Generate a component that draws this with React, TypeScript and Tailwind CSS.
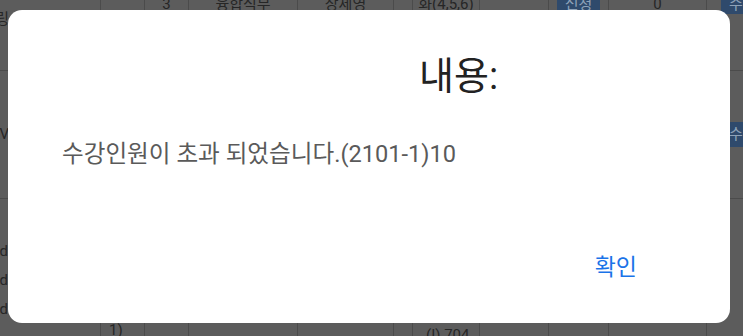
import React from "react";

const COLS = [200, 44, 44, 109, 96, 19, 67, 69, 60, 98, 60];

function Cell({ w, children, className = "" }: { w: number; children?: React.ReactNode; className?: string }) {
  return (
    <div style={{ width: w }} className={`shrink-0 border-r border-[#4b4b4b] ${className}`}>
      {children}
    </div>
  );
}

function DimButton({ label }: { label: string }) {
  return (
    <span className="rounded-sm bg-[#2f4a6c] px-2 py-[1px] text-[15px] text-[#8ea2b8]">{label}</span>
  );
}

export default function App() {
  return (
    <div className="relative h-[336px] w-[743px] overflow-hidden bg-[#5c5c5c] font-['Roboto','Noto_Sans_CJK_KR',sans-serif]">
      {/* dimmed table behind the dialog */}
      <div className="ml-[-99px] mt-[-40px] flex flex-col text-[15px] text-[#262626]">
        <div className="flex h-[111px] border-b border-[#4b4b4b]">
          <Cell w={COLS[0]} className="flex items-end pb-[40px]">
            <span className="ml-[40px] w-[68px] text-right">운동장링</span>
          </Cell>
          <Cell w={COLS[1]} />
          <Cell w={COLS[2]} className="pt-[33px] text-center">3</Cell>
          <Cell w={COLS[3]} className="pt-[33px] text-center">융합식무</Cell>
          <Cell w={COLS[4]} className="pt-[33px] text-center">장세영</Cell>
          <Cell w={COLS[5]} />
          <Cell w={COLS[6]} className="pt-[33px] text-center">화(4,5,6)</Cell>
          <Cell w={COLS[7]} />
          <Cell w={COLS[8]} className="pt-[33px] text-center"><DimButton label="신청" /></Cell>
          <Cell w={COLS[9]} className="pt-[33px] text-center">0</Cell>
          <Cell w={COLS[10]} className="pl-[14px] pt-[33px]"><DimButton label="수" /></Cell>
        </div>
        <div className="flex h-[128px] border-b border-[#4b4b4b]">
          <Cell w={COLS[0]} className="flex items-center">
            <span className="ml-[40px] w-[68px] text-right">AV</span>
          </Cell>
          <Cell w={COLS[1]} />
          <Cell w={COLS[2]} />
          <Cell w={COLS[3]} />
          <Cell w={COLS[4]} />
          <Cell w={COLS[5]} />
          <Cell w={COLS[6]} />
          <Cell w={COLS[7]} />
          <Cell w={COLS[8]} />
          <Cell w={COLS[9]} />
          <Cell w={COLS[10]} className="flex items-center pl-[14px]"><DimButton label="수" /></Cell>
        </div>
        <div className="flex h-[200px]">
          <Cell w={COLS[0]} className="flex flex-col items-end pt-[38px] leading-[29px]">
            <span className="mr-[92px]">Word</span>
            <span className="mr-[92px]">World</span>
            <span className="mr-[92px]">Word</span>
          </Cell>
          <Cell w={COLS[1]} className="pl-[8px] pt-[120px]">1)</Cell>
          <Cell w={COLS[2]} />
          <Cell w={COLS[3]} />
          <Cell w={COLS[4]} />
          <Cell w={COLS[5]} />
          <Cell w={COLS[6]} className="pl-[13px] pt-[125px]">(I) 704</Cell>
          <Cell w={COLS[7]} />
          <Cell w={COLS[8]} />
          <Cell w={COLS[9]} />
          <Cell w={COLS[10]} />
        </div>
      </div>

      {/* alert dialog */}
      <div className="absolute left-[8px] top-[10px] flex h-[313px] w-[722px] flex-col rounded-[14px] bg-white">
        <h2 className="pl-[411px] pt-[42px] text-[38px] leading-[48px] text-[#222222]">내용:</h2>
        <p className="pl-[54px] pt-[38px] text-[23.6px] leading-[32px] text-[#5a5a5a]">
          수강인원이 초과 되었습니다.(2101-1)10
        </p>
        <div className="mt-auto flex justify-end pb-[40px] pr-[93px]">
          <button type="button" className="text-[23px] leading-[30px] text-[#1a73e8]">
            확인
          </button>
        </div>
      </div>
    </div>
  );
}
